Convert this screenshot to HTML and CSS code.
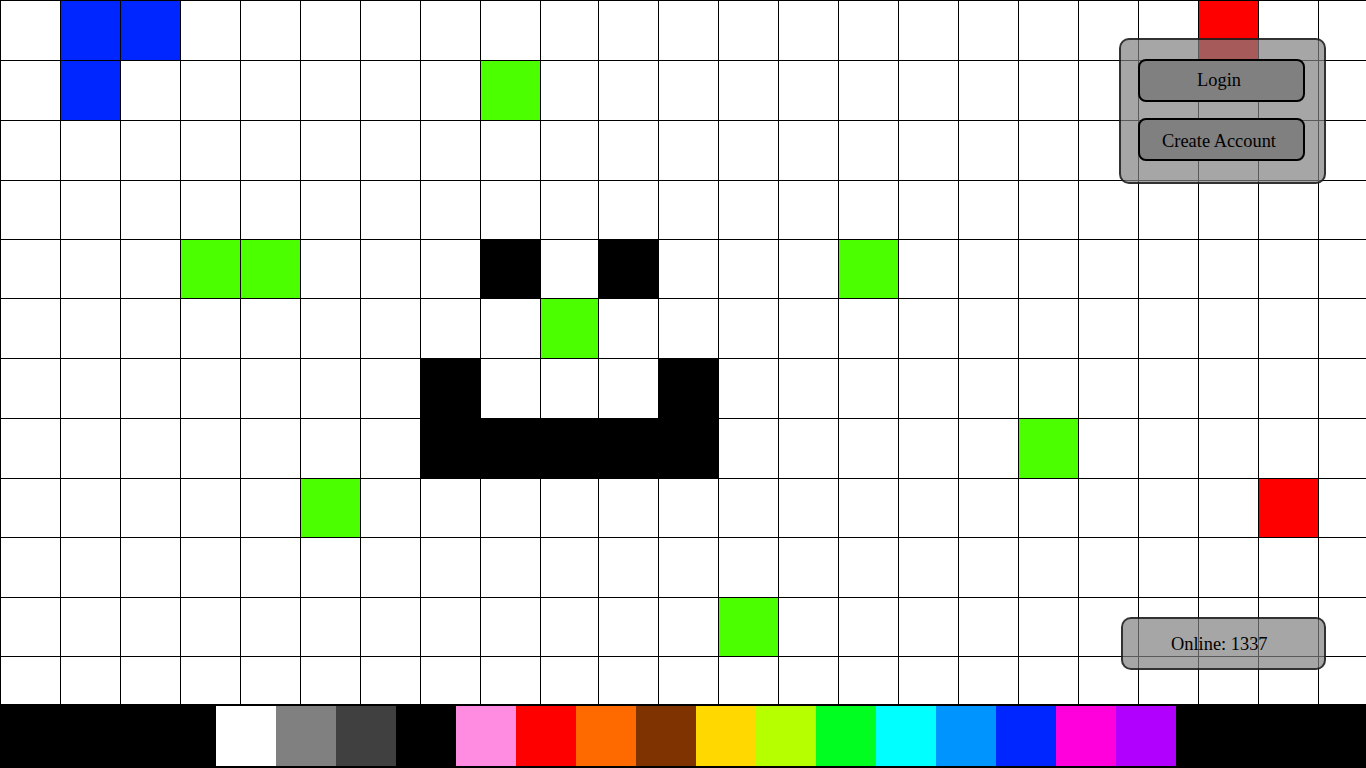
FILE: index.html
```html
<!DOCTYPE html>
<html lang="en">
<head>
<meta charset="utf-8">
<title>Pixel Board</title>
<link rel="stylesheet" href="styles.css">
</head>
<body>
<main class="board">
  <div class="grid">
    <i></i><i class="b"></i><i class="b"></i><i></i><i></i><i></i><i></i><i></i><i></i><i></i><i></i><i></i><i></i><i></i><i></i><i></i><i></i><i></i><i></i><i></i><i class="r"></i><i></i><i></i>
    <i></i><i class="b"></i><i></i><i></i><i></i><i></i><i></i><i></i><i class="g"></i><i></i><i></i><i></i><i></i><i></i><i></i><i></i><i></i><i></i><i></i><i></i><i></i><i></i><i></i>
    <i></i><i></i><i></i><i></i><i></i><i></i><i></i><i></i><i></i><i></i><i></i><i></i><i></i><i></i><i></i><i></i><i></i><i></i><i></i><i></i><i></i><i></i><i></i>
    <i></i><i></i><i></i><i></i><i></i><i></i><i></i><i></i><i></i><i></i><i></i><i></i><i></i><i></i><i></i><i></i><i></i><i></i><i></i><i></i><i></i><i></i><i></i>
    <i></i><i></i><i></i><i class="g"></i><i class="g"></i><i></i><i></i><i></i><i class="k"></i><i></i><i class="k"></i><i></i><i></i><i></i><i class="g"></i><i></i><i></i><i></i><i></i><i></i><i></i><i></i><i></i>
    <i></i><i></i><i></i><i></i><i></i><i></i><i></i><i></i><i></i><i class="g"></i><i></i><i></i><i></i><i></i><i></i><i></i><i></i><i></i><i></i><i></i><i></i><i></i><i></i>
    <i></i><i></i><i></i><i></i><i></i><i></i><i></i><i class="k"></i><i></i><i></i><i></i><i class="k"></i><i></i><i></i><i></i><i></i><i></i><i></i><i></i><i></i><i></i><i></i><i></i>
    <i></i><i></i><i></i><i></i><i></i><i></i><i></i><i class="k"></i><i class="k"></i><i class="k"></i><i class="k"></i><i class="k"></i><i></i><i></i><i></i><i></i><i></i><i class="g"></i><i></i><i></i><i></i><i></i><i></i>
    <i></i><i></i><i></i><i></i><i></i><i class="g"></i><i></i><i></i><i></i><i></i><i></i><i></i><i></i><i></i><i></i><i></i><i></i><i></i><i></i><i></i><i></i><i class="r"></i><i></i>
    <i></i><i></i><i></i><i></i><i></i><i></i><i></i><i></i><i></i><i></i><i></i><i></i><i></i><i></i><i></i><i></i><i></i><i></i><i></i><i></i><i></i><i></i><i></i>
    <i></i><i></i><i></i><i></i><i></i><i></i><i></i><i></i><i></i><i></i><i></i><i></i><i class="g"></i><i></i><i></i><i></i><i></i><i></i><i></i><i></i><i></i><i></i><i></i>
    <i></i><i></i><i></i><i></i><i></i><i></i><i></i><i></i><i></i><i></i><i></i><i></i><i></i><i></i><i></i><i></i><i></i><i></i><i></i><i></i><i></i><i></i><i></i>
  </div>
  <div class="palette">
    <span class="sw white"></span>
    <span class="sw gray"></span>
    <span class="sw dark"></span>
    <span class="sw black"></span>
    <span class="sw pink"></span>
    <span class="sw red"></span>
    <span class="sw orange"></span>
    <span class="sw brown"></span>
    <span class="sw yellow"></span>
    <span class="sw lime"></span>
    <span class="sw green"></span>
    <span class="sw cyan"></span>
    <span class="sw sky"></span>
    <span class="sw blue"></span>
    <span class="sw magenta"></span>
    <span class="sw purple"></span>
  </div>
  <div class="auth-panel">
    <button class="btn">Login</button>
    <button class="btn btn-create">Create Account</button>
  </div>
  <div class="online">Online: 1337</div>
</main>
</body>
</html>
```
FILE: styles.css
```css
html, body {
  margin: 0;
  padding: 0;
  overflow: hidden;
  background: #fff;
  font-family: "Liberation Serif", "Times New Roman", serif;
}

.board {
  position: relative;
  width: 1366px;
  height: 768px;
  display: flex;
  flex-direction: column;
}

.grid {
  box-sizing: border-box;
  height: 704px;
  flex: none;
  display: grid;
  background: #000;
  padding: 1px 0 0 1px;
  gap: 1px;
  grid-template-columns: repeat(9, 59px) 57px repeat(12, 59px) 47px;
  grid-template-rows: 59px 59px 59px 58px 58px 59px 59px 59px 58px 59px 58px 47px;
  overflow: hidden;
}

.grid i {
  display: block;
  background: #fff;
}
.grid i.b { background: #0026ff; }
.grid i.g { background: #4cff00; }
.grid i.r { background: #ff0000; }
.grid i.k { background: #000; }

.palette {
  box-sizing: border-box;
  height: 64px;
  flex: none;
  display: flex;
  align-items: center;
  background: #000;
  padding-left: 216px;
}

.sw {
  width: 60px;
  height: 60px;
  flex: none;
}
.white { background: #ffffff; }
.gray { background: #808080; }
.dark { background: #404040; }
.black { background: #000000; }
.pink { background: #ff8ce1; }
.red { background: #ff0000; }
.orange { background: #ff6a00; }
.brown { background: #7f3300; }
.yellow { background: #ffd800; }
.lime { background: #b6ff00; }
.green { background: #00ff21; }
.cyan { background: #00ffff; }
.sky { background: #0094ff; }
.blue { background: #0026ff; }
.magenta { background: #ff00dc; }
.purple { background: #b200ff; }

.auth-panel {
  position: absolute;
  left: 1119px;
  top: 38px;
  width: 207px;
  height: 146px;
  box-sizing: border-box;
  border: 2px solid rgba(0, 0, 0, 0.7);
  border-radius: 10px;
  background: rgba(128, 128, 128, 0.7);
  padding: 19px 20px 21px 17px;
  display: flex;
  flex-direction: column;
  gap: 16px;
}

.btn {
  box-sizing: border-box;
  width: 167px;
  height: 43px;
  border: 2px solid #000;
  border-radius: 8px;
  background: #808080;
  color: #000;
  font-family: "Liberation Serif", "Times New Roman", serif;
  font-size: 18.4px;
  padding: 0 5px 0 0;
  margin: 0;
}

.btn-create {
  padding-top: 4px;
}

.online {
  position: absolute;
  left: 1121px;
  top: 617px;
  width: 205px;
  height: 53px;
  box-sizing: border-box;
  border: 2px solid rgba(0, 0, 0, 0.7);
  border-radius: 10px;
  background: rgba(128, 128, 128, 0.7);
  display: flex;
  align-items: center;
  padding-left: 48px;
  padding-top: 1px;
  font-size: 18.4px;
  color: #000;
}
```
